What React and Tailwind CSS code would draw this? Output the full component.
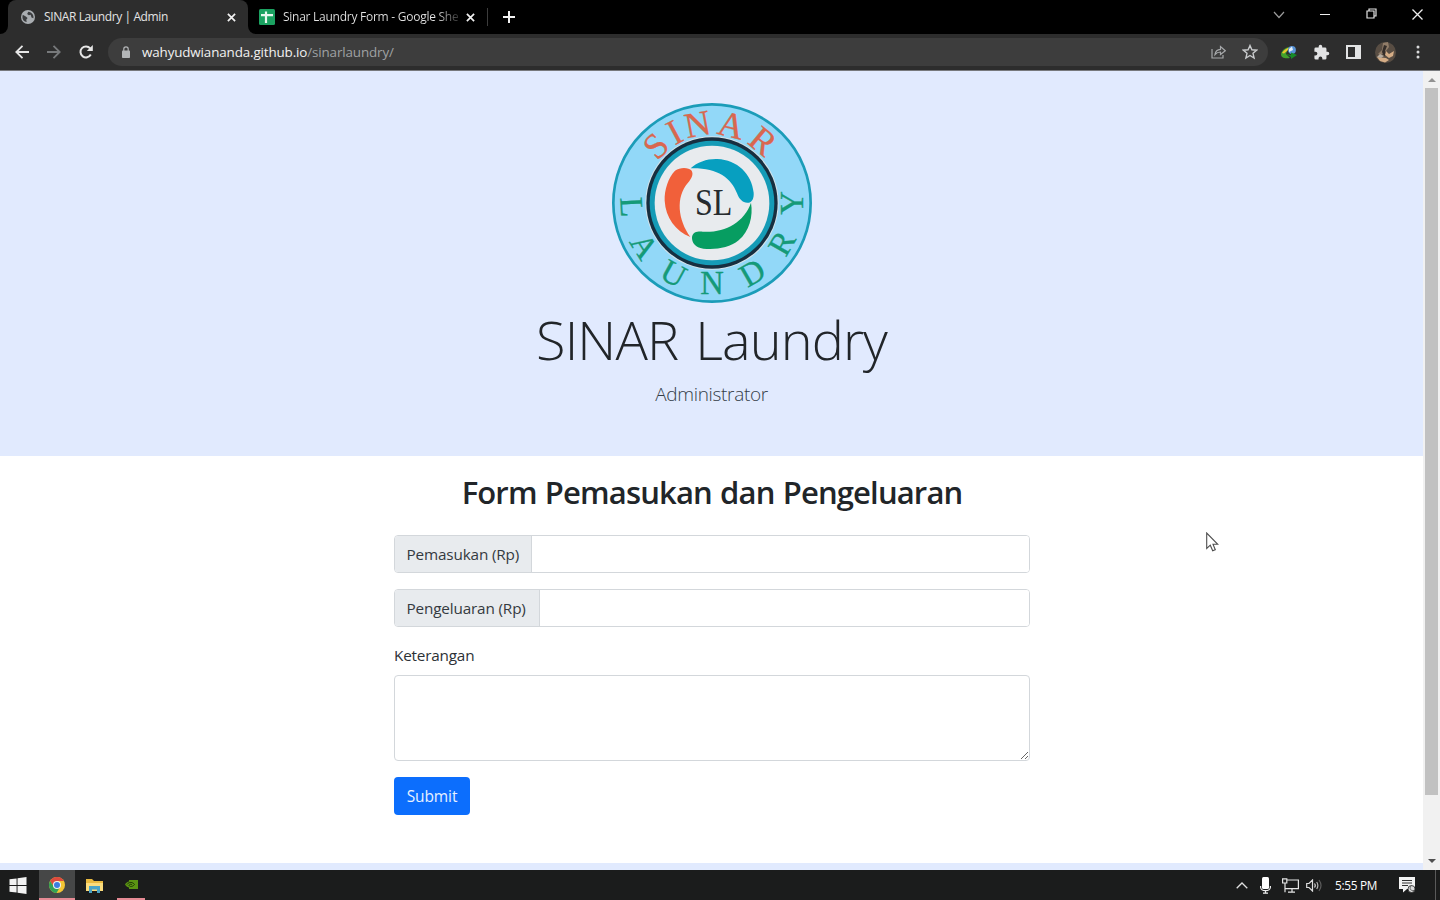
import React from "react";

const topLetters = [
  ["S", -44.5], ["I", -28], ["N", -10.5], ["A", 14], ["R", 39.5],
];
const bottomLetters = [
  ["L", 87], ["A", 57.5], ["U", 28.6], ["N", 0], ["D", -30], ["R", -60], ["Y", -90],
];

function Logo() {
  return (
    <svg viewBox="36 26 600 600" className="mt-px ml-px h-[200px] w-[200px]" fontFamily="'Liberation Serif', serif">
      <circle cx="336" cy="326" r="296" fill="#92d8f8" stroke="#1b9cb8" strokeWidth="8" />
      <circle cx="336" cy="326" r="200" fill="#d5e3ea" />
      <circle cx="336" cy="326" r="197" fill="#172f40" />
      <circle cx="336" cy="326" r="187" fill="#159bb6" />
      <circle cx="336" cy="326" r="172" fill="#e8ebee" />
      {topLetters.map(([c, a]) => (
        <text key={c} x="336" y="121" fontSize="107" textAnchor="middle" fill="#d9674f" stroke="#d9674f" strokeWidth="1" transform={`rotate(${a} 336 326)`}>{c}</text>
      ))}
      {bottomLetters.map(([c, a]) => (
        <text key={c + a} x="336" y="600" fontSize="98" textAnchor="middle" fill="#159a78" stroke="#159a78" strokeWidth="1" transform={`rotate(${a} 336 326)`}>{c}</text>
      ))}
      <path d="M272 222C292 203 322 193 352 194C412 197 455 238 461 295C462 312 457 321 447 325C430 328 418 316 411 297C393 250 352 220 272 222Z" fill="#079fc0" />
      <path d="M453 325C460 366 448 410 416 438C388 461 346 467 310 463C286 460 275 445 276 428C279 413 291 411 308 412C372 416 432 386 453 325Z" fill="#079d61" />
      <path d="M271 428C226 409 197 370 194 319C193 286 205 249 225 229C241 218 266 219 275 229C281 240 275 252 264 265C226 309 234 376 271 428Z" fill="#f1603a" />
      <text x="285" y="363" fontSize="114" textLength="112" lengthAdjust="spacingAndGlyphs" fill="#262b2f">SL</text>
    </svg>
  );
}

function Globe() {
  return (
    <svg viewBox="0 0 16 16" className="h-[14px] w-[14px]">
      <circle cx="8" cy="8" r="8" fill="#a9adb1" />
      <path d="M2 5.5L5.5 7.5L7.5 9L6 11L6.5 13.8C3.5 13.5 1.5 11 1.6 8ZM8.3 2L7 4.5L9 6L11 5.5L12 8.5L14.2 9.5C14.8 6 12.5 2.5 8.3 2Z" fill="#3b3d3f" />
    </svg>
  );
}

function TabClose() {
  return (
    <svg viewBox="0 0 10 10" className="h-[9px] w-[9px] shrink-0" stroke="#f1f1f1" strokeWidth="1.9">
      <path d="M1 1L9 9M9 1L1 9" />
    </svg>
  );
}

function TabStrip() {
  return (
    <div className="flex h-[34px] bg-black text-[12px] leading-[34px] text-[#e4e4e4]">
      <div className="flex w-2 items-end bg-[#2d2d2d]"><div className="h-[34px] w-2 rounded-br-lg bg-black" /></div>
      <div className="flex w-[240px] items-center rounded-t-lg bg-[#2d2d2d] pl-[13px] pr-[12px]">
        <Globe />
        <span className="ml-[9px] grow whitespace-nowrap tracking-[-0.4px]">SINAR Laundry | Admin</span>
        <TabClose />
      </div>
      <div className="flex w-2 items-end bg-[#2d2d2d]"><div className="h-[34px] w-2 rounded-bl-lg bg-black" /></div>
      <div className="flex w-[231px] items-center pl-[3px] pr-[12px]">
        <svg viewBox="0 0 16 16" className="h-4 w-4 shrink-0">
          <rect width="16" height="16" rx="1.5" fill="#1ba261" />
          <path d="M7 2.5V14M2 6.2H14" stroke="#e9f8ef" strokeWidth="2.2" />
        </svg>
        <span className="ml-2 w-[175px] overflow-hidden whitespace-nowrap bg-linear-to-r from-[#e4e4e4] from-88% to-[#333333] bg-clip-text tracking-[-0.26px] text-transparent">Sinar Laundry Form - Google She</span>
        <span className="ml-[8px] flex"><TabClose /></span>
      </div>
      <div className="mt-[8px] h-[18px] w-px bg-[#3c3c3c]" />
      <svg viewBox="0 0 12 12" className="mt-[11px] ml-[15px] h-[12px] w-[12px]" stroke="#f3f3f3" strokeWidth="2"><path d="M6 0V12M0 6H12" /></svg>
      <div className="ml-auto flex items-start">
        <svg viewBox="0 0 12 8" className="mt-[11px] mr-[35px] h-[8px] w-[12px]" fill="none" stroke="#9b9b9b" strokeWidth="1.2"><path d="M1 1L6 6.5L11 1" /></svg>
        <div className="mt-[14px] mr-[36px] h-px w-[10px] bg-[#eeeeee]" />
        <svg viewBox="0 0 11 11" className="mt-[8px] mr-[35px] h-[11px] w-[11px]" fill="none" stroke="#e4e4e4" strokeWidth="1.2"><path d="M1 3H8V10H1ZM3 3V1H10V8H8" /></svg>
        <svg viewBox="0 0 11 11" className="mt-[9px] mr-[17px] h-[11px] w-[11px]" stroke="#efefef" strokeWidth="1.3"><path d="M.5 .5L10.5 10.5M10.5 .5L.5 10.5" /></svg>
      </div>
    </div>
  );
}

function Toolbar() {
  return (
    <div className="flex h-[37px] items-center border-b border-[#77797d] bg-[#2d2d2d] pl-[15px]">
      <svg viewBox="0 0 14 14" className="h-[14px] w-[14px]" fill="none" stroke="#e6e6e6" strokeWidth="1.8"><path d="M14 7H1.5M7.5 .8L1.3 7L7.5 13.2" /></svg>
      <svg viewBox="0 0 14 14" className="ml-[18px] h-[14px] w-[14px]" fill="none" stroke="#77797b" strokeWidth="1.8"><path d="M0 7H12.5M6.5 .8L12.7 7L6.5 13.2" /></svg>
      <svg viewBox="0 0 14 14" className="ml-[18px] h-[14px] w-[14px]"><path d="M11.8 9.6A5.5 5.5 0 1 1 11.2 3.4" fill="none" stroke="#e6e6e6" strokeWidth="2" /><path d="M13.8 0V6H7.8Z" fill="#e6e6e6" /></svg>
      <div className="ml-[15px] flex h-7 w-[1160px] items-center rounded-full bg-[#3d3d3d] pl-[14px] pr-[10px]">
        <svg viewBox="0 0 8 12" className="h-[12px] w-[8px]"><rect y="4.5" width="8" height="7.5" rx=".8" fill="#b3b5b7" /><path d="M1.8 5V3A2.2 2.2 0 0 1 6.2 3V5" fill="none" stroke="#b3b5b7" strokeWidth="1.2" /></svg>
        <span className="ml-[12px] grow whitespace-nowrap text-[13.4px] leading-7 tracking-[-0.13px] text-[#9fa1a3]"><span className="text-[#f1f1f1]">wahyudwiananda.github.io</span>/sinarlaundry/</span>
        <svg viewBox="0 0 15 14" className="mr-[16px] h-[14px] w-[15px]" fill="none" stroke="#a6a8aa" strokeWidth="1.2"><path d="M1 4V13H12V10M4 9.5C4.5 6 6.5 4.5 9.5 4.3V1.5L14.3 5.7L9.5 9.5V7C7 7 5.5 7.8 4 9.5Z" /></svg>
        <svg viewBox="0 0 16 16" className="h-[16px] w-[16px]" fill="none" stroke="#c9cbcd" strokeWidth="1.4"><path d="M8 1.5L9.9 5.8L14.6 6.2L11 9.3L12.1 14L8 11.5L3.900 14L5 9.3L1.4 6.2L6.1 5.8Z" /></svg>
      </div>
      <svg viewBox="0 0 16 13" className="ml-[13px] h-[13px] w-[16px]">
        <path d="M0 8C1 4 5 1 9 1L6 5L5 8L9 12C4 13 0 12 0 8Z" fill="#43a02c" />
        <path d="M1 7C3 3.500 6 2 9 1.5L6 5L3 7.500Z" fill="#e9c62c" />
        <circle cx="11" cy="4" r="3.900" fill="#5793d7" />
        <path d="M8 3L11 .5L12 4L8 6Z" fill="#e3eef7" />
        <path d="M5 8L10 9V6.500L16 9L10 13V11Z" fill="#178b27" />
      </svg>
      <svg viewBox="0 0 24 24" className="ml-[16px] h-[17px] w-[17px]" fill="#e2e3e4"><path d="M20.500 11H19V7a2 2 0 0 0-2-2h-4V3.500a2.500 2.500 0 0 0-5 0V5H4a2 2 0 0 0-2 2v3.800h1.500a2.700 2.700 0 0 1 0 5.400H2V20a2 2 0 0 0 2 2h3.800v-1.500a2.700 2.700 0 0 1 5.400 0V22H17a2 2 0 0 0 2-2v-4h1.500a2.500 2.500 0 0 0 0-5z" /></svg>
      <svg viewBox="0 0 15 14" className="ml-[16px] h-[14px] w-[15px]"><path d="M0 0H15V14H0ZM2 2V12H9V2Z" fill="#e2e3e4" fillRule="evenodd" /></svg>
      <svg viewBox="0 0 21 21" className="ml-[14px] h-[21px] w-[21px]">
        <circle cx="10.500" cy="10.500" r="10.500" fill="#584d43" />
        <path d="M8 1L13 0L14 5L11 9L6 13L3 12L7 8Z" fill="#907c68" />
        <path d="M9 3L12 4L10 9L12 13L9 14L7 10Z" fill="#342d29" />
        <path d="M11 9L14 12L19 9L18 14L14 16L10 13ZM2 15L11 16L14 18L10 20.500L5 19Z" fill="#d5ad86" />
        <path d="M5 12L9 14L6 16L2 15Z" fill="#b6aca0" />
      </svg>
      <svg viewBox="0 0 4 14" className="ml-[20px] h-[14px] w-[4px]" fill="#d9dadb"><circle cx="2" cy="2" r="1.500" /><circle cx="2" cy="7" r="1.500" /><circle cx="2" cy="12" r="1.500" /></svg>
    </div>
  );
}

function AmountField({ label, width }) {
  return (
    <div className="mb-4 flex h-[38px] overflow-hidden rounded-[4px] border border-[#d3d7db]">
      <label className={`${width} shrink-0 whitespace-nowrap border-r border-[#d3d7db] bg-[#e8ebee] pl-[11.5px] text-[15.3px] leading-[37px] tracking-[-0.16px] text-[#343a3f]`}>{label}</label>
      <input className="min-w-0 grow bg-white outline-none" />
    </div>
  );
}

function Taskbar() {
  return (
    <div className="flex h-[30px] items-stretch bg-[#1b1c1c] text-white">
      <div className="flex w-[39px] items-center pl-[9px]">
        <svg viewBox="0 0 18 18" className="h-[17px] w-[18px]" fill="#f2f2f2"><path d="M0 2.500L7.500 1.500V8.500H0ZM8.500 1.300L18 0V8.500H8.500ZM0 9.500H7.500V16.500L0 15.500ZM8.500 9.500H18V18L8.500 16.700Z" /></svg>
      </div>
      <div className="flex w-9 items-center justify-center border-b-2 border-[#e58a94] bg-[#464747] pt-px">
        <svg viewBox="0 0 16 16" className="h-4 w-4">
          <circle cx="8" cy="8" r="8" fill="#f4c534" />
          <path d="M1.070 4A8 8 0 0 1 14.930 4H8L5 10Z" fill="#dd4a3e" />
          <path d="M1.070 4A8 8 0 0 0 7.500 16L11 10L5 10Z" fill="#33a256" />
          <circle cx="8" cy="8" r="4" fill="#f3f3f3" /><circle cx="8" cy="8" r="3" fill="#3c7ee0" />
        </svg>
      </div>
      <div className="flex w-[38px] items-center justify-center">
        <svg viewBox="0 0 17 15" className="h-[15px] w-[17px]"><path d="M0 1H6L8 3H17V13H0Z" fill="#e9b93f" /><path d="M0 5H17V13H0Z" fill="#fbdc7c" /><path d="M3 15V8H14V15H11V11.500H6V15Z" fill="#4aa3c6" /></svg>
      </div>
      <div className="ml-1 flex w-7 items-center justify-center border-b-2 border-[#e58a94] pt-px">
        <svg viewBox="0 0 13 9" className="h-[9px] w-[13px]"><path d="M4 0H13V9H4V7.500C2 7 .5 5.500 0 4.500C1 2.800 2.500 1.800 4 1.500Z" fill="#5b9413" /><path d="M2 4.500C4 1.500 8 2 9.500 4.500C7.500 7 5 7 4 5.500C4.500 4 6 4 7 4.800" fill="none" stroke="#1d3206" strokeWidth=".9" /></svg>
      </div>
      <div className="ml-auto flex items-center">
        <svg viewBox="0 0 12 7" className="mr-[12px] h-[7px] w-[12px]" fill="none" stroke="#e0e0e0" strokeWidth="1.300"><path d="M.7 6.300L6 1L11.300 6.300" /></svg>
        <svg viewBox="0 0 11 17" className="mr-[11px] h-[17px] w-[11px]"><rect x="2" y="0" width="7" height="12" rx="1.500" fill="#fff" /><path d="M.6 9V10.500C1 13 3 13.600 5.500 13.600S10 13 10.400 10.500V9M5.500 13.600V16M3 16.200H8" fill="none" stroke="#eee" strokeWidth="1.200" /></svg>
        <svg viewBox="0 0 17 15" className="mr-[7px] h-[15px] w-[17px]" fill="none" stroke="#e5e5e5" strokeWidth="1.200"><path d="M5 2H16.400V10.600H3V5M10 10.600V14M6 14.200H13M3 5V14.200M.6 .8H4.800V5H.6Z" /></svg>
        <svg viewBox="0 0 17 13" className="mr-[12px] h-[13px] w-[17px]" fill="none" stroke="#dedede" strokeWidth="1.200"><path d="M.7 4.500H3L6.500 1V12L3 8.500H.7ZM8.500 4.500Q10 6.500 8.500 8.500" /><path d="M10.700 3Q13 6.500 10.700 10" stroke="#b8b8b8" /><path d="M13 1Q17 6.500 13 12" stroke="#5d5d5d" /></svg>
        <span className="w-[42px] whitespace-nowrap text-[11.800px] leading-[30px] tracking-[-0.300px]">5:55 PM</span>
        <svg viewBox="0 0 17 16" className="mr-[19px] ml-[22px] h-[16px] w-[17px]"><path d="M0 0H16V12H8L4 15.500V12H0Z" fill="#f3f3f3" /><path d="M3 3.500H13M3 6H13M3 8.500H9" stroke="#333" /><circle cx="12.500" cy="12" r="3.500" fill="#ddd" stroke="#222" strokeWidth=".8" /><path d="M12.500 8.500C10 11 11 14 15 13.500" fill="none" stroke="#444" strokeWidth=".8" /></svg>
        <div className="mr-[4px] h-full w-px bg-[#5a5a5a]" />
      </div>
    </div>
  );
}

export default function App() {
  return (
    <div className="relative flex h-[900px] w-[1440px] flex-col overflow-hidden bg-white font-['Open_Sans','Noto_Sans',sans-serif] text-[#212529]">
      <TabStrip />
      <Toolbar />
      <div className="flex h-[799px]">
        <main className="flex w-[1423px] flex-col">
          <header className="flex h-[385px] shrink-0 flex-col items-center bg-[#e1eafe] pt-[31px]">
            <Logo />
            <h1 className="mt-[2px] whitespace-nowrap text-[54px] leading-[68px] font-light tracking-[-0.9px] [word-spacing:4px]">SINAR Laundry</h1>
            <p className="mt-[6px] whitespace-nowrap text-[19px] leading-[30px] font-light tracking-[-0.32px] text-[#343d47]">Administrator</p>
          </header>
          <section className="ml-[394px] flex h-[407px] w-[636px] shrink-0 flex-col">
            <h2 className="mt-[17px] mb-[23px] text-center text-[31px] leading-[39px] font-semibold tracking-[-0.85px] [word-spacing:1px] whitespace-nowrap">Form Pemasukan dan Pengeluaran</h2>
            <AmountField label="Pemasukan (Rp)" width="w-[137px]" />
            <AmountField label="Pengeluaran (Rp)" width="w-[145px]" />
            <label className="text-[15.300px] leading-6 tracking-[-0.2px] text-[#2c3136]">Keterangan</label>
            <textarea className="mt-2 h-[86px] w-full shrink-0 resize rounded-[4px] border border-[#d3d7db] outline-none" />
            <button className="mt-4 h-[38px] w-[76px] rounded-[4px] bg-[#0c6efd] pt-[2px] text-[15.500px] tracking-[-0.1px] text-[#e7f1ff]">Submit</button>
          </section>
          <div className="h-[7px] bg-[#e1eafe]" />
        </main>
        <div className="flex w-[17px] flex-col items-center justify-between bg-[#f1f1f1] py-[7px]">
          <svg viewBox="0 0 8 4" className="h-1 w-2" fill="#929292"><path d="M0 4L4 0L8 4Z" /></svg>
          <div className="mt-[6px] mb-auto h-[707px] w-[13px] bg-[#c1c1c1]" />
          <svg viewBox="0 0 8 4" className="h-1 w-2" fill="#505050"><path d="M0 0L4 4L8 0Z" /></svg>
        </div>
      </div>
      <Taskbar />
      <svg viewBox="0 0 13 20" className="absolute top-[532px] left-[1206px] h-[20px] w-[13px]"><path d="M.7 1V16.500L4.300 13.200L6.700 18.800L9.300 17.700L7 12.300H11.800Z" fill="#fff" stroke="#4e4e4e" strokeWidth="1.100" /></svg>
    </div>
  );
}
